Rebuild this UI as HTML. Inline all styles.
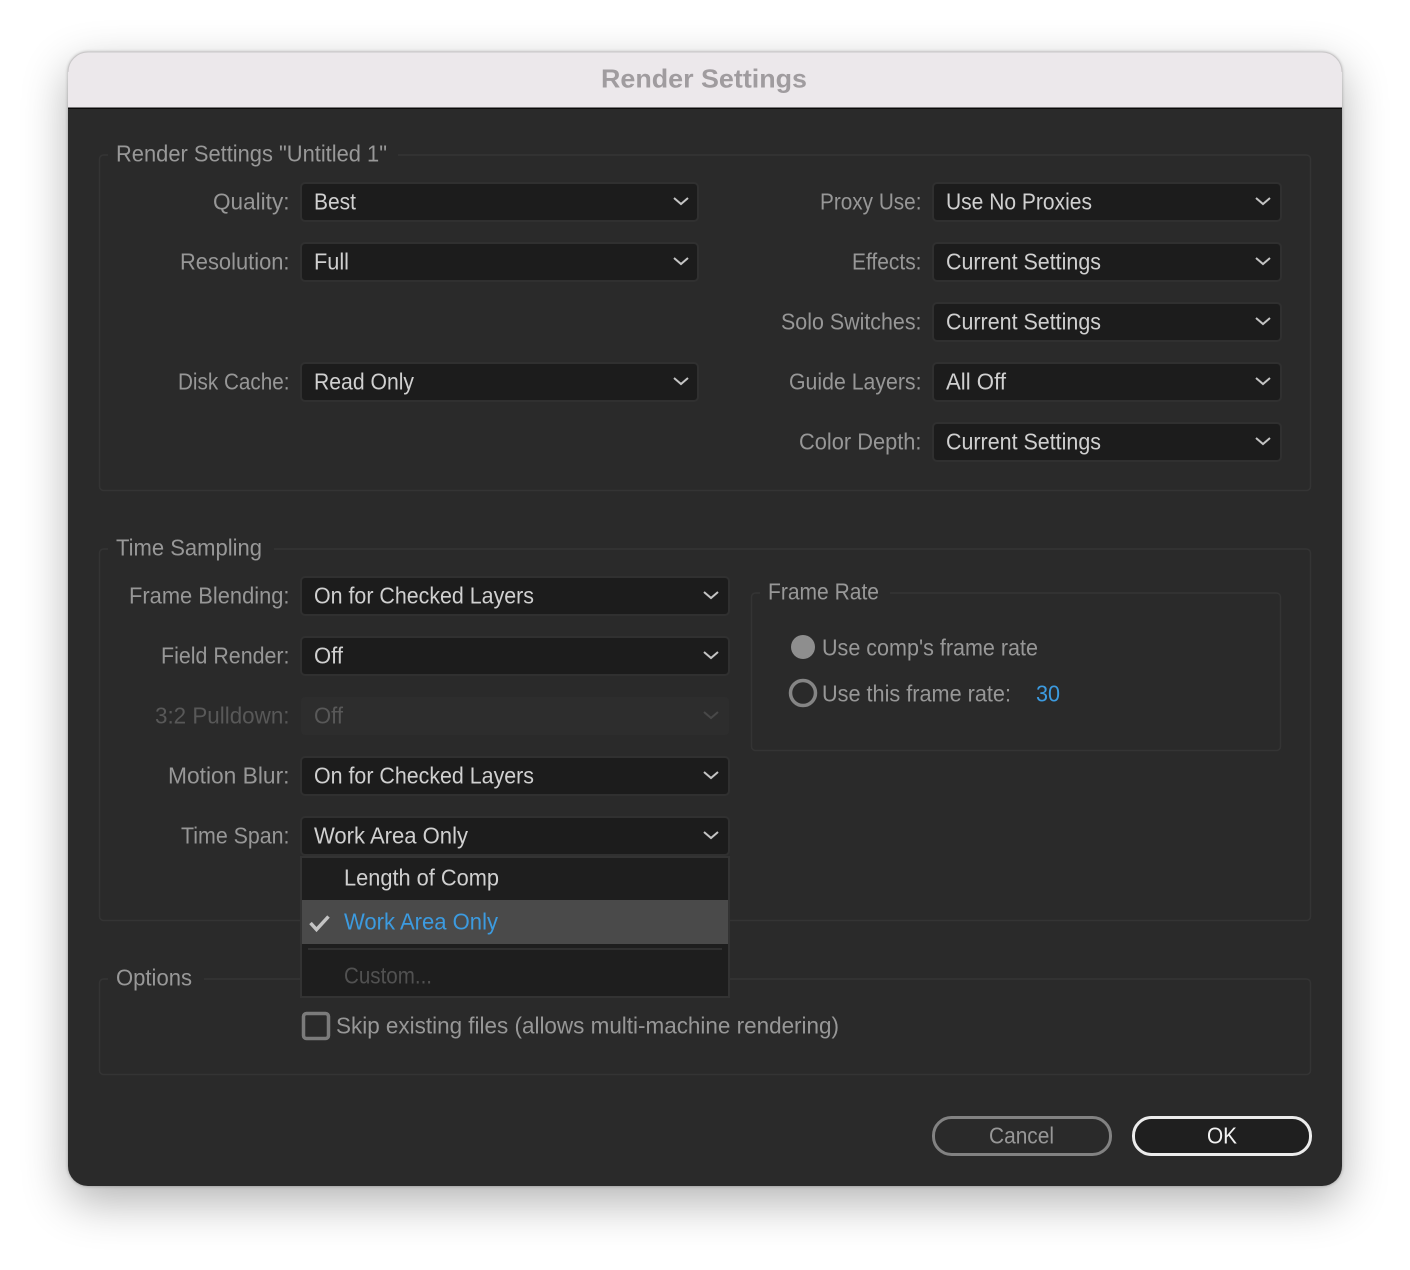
<!DOCTYPE html>
<html><head><meta charset="utf-8"><title>Render Settings</title>
<style>
html,body{margin:0;padding:0;width:1410px;height:1270px;background:#fff;overflow:hidden}
#win{position:absolute;left:68px;top:52px;width:1274px;height:1134px;border-radius:20px;background:#2a2a2a;box-shadow:0 16px 46px rgba(0,0,0,.30),0 0 3px rgba(0,0,0,.3)}
svg{position:absolute;left:0;top:0}
text{font-family:"Liberation Sans",sans-serif;font-size:23px}
.l{fill:#979797}.v{fill:#d0d0d0}.g{fill:#989898}.d{fill:#585858}
.s{fill:#1c1c1c;stroke:#303030;stroke-width:2}
.c{fill:none;stroke:#c4c4c4;stroke-width:2}
.b{fill:none;stroke:#343434;stroke-width:1.5}
</style></head><body>
<div id="win"></div>
<svg width="1410" height="1270" viewBox="0 0 1410 1270">
<path d="M68 108V72a20 20 0 0 1 20-20H1322a20 20 0 0 1 20 20V108Z" fill="#ece8eb"/>
<path d="M68 72a20 20 0 0 1 20-20H1322a20 20 0 0 1 20 20" fill="none" stroke="#c9c7c8" stroke-width="1"/>
<rect x="68" y="107.500" width="1274" height="1.500" fill="#0a0a0a"/>
<text x="601" y="87.500" textLength="206" lengthAdjust="spacingAndGlyphs" style="font-size:26px;font-weight:bold" fill="#a09c9f">Render Settings</text>

<!-- group frames -->
<path class="b" d="M108 155H103.500a4 4 0 0 0-4 4V486.500a4 4 0 0 0 4 4H1306.500a4 4 0 0 0 4-4V159a4 4 0 0 0-4-4H398"/>
<path class="b" d="M108 549H103.500a4 4 0 0 0-4 4V916.500a4 4 0 0 0 4 4H1306.500a4 4 0 0 0 4-4V553a4 4 0 0 0-4-4H274"/>
<path class="b" d="M108 979H103.500a4 4 0 0 0-4 4V1070.500a4 4 0 0 0 4 4H1306.500a4 4 0 0 0 4-4V983a4 4 0 0 0-4-4H204"/>
<path class="b" d="M760 593H755.500a4 4 0 0 0-4 4V746.500a4 4 0 0 0 4 4H1276.500a4 4 0 0 0 4-4V597a4 4 0 0 0-4-4H890"/>

<text class="g" x="116" y="161.500" textLength="271" lengthAdjust="spacingAndGlyphs">Render Settings "Untitled 1"</text>
<text class="g" x="116" y="555.500" textLength="146" lengthAdjust="spacingAndGlyphs">Time Sampling</text>
<text class="g" x="768" y="599.500" textLength="111" lengthAdjust="spacingAndGlyphs">Frame Rate</text>
<text class="g" x="116" y="985.500" textLength="76" lengthAdjust="spacingAndGlyphs">Options</text>

<!-- selects left -->
<rect class="s" x="301" y="183" width="397" height="38" rx="4"/>
<rect class="s" x="301" y="243" width="397" height="38" rx="4"/>
<rect class="s" x="301" y="363" width="397" height="38" rx="4"/>
<!-- selects right -->
<rect class="s" x="933" y="183" width="348" height="38" rx="4"/>
<rect class="s" x="933" y="243" width="348" height="38" rx="4"/>
<rect class="s" x="933" y="303" width="348" height="38" rx="4"/>
<rect class="s" x="933" y="363" width="348" height="38" rx="4"/>
<rect class="s" x="933" y="423" width="348" height="38" rx="4"/>
<!-- selects time -->
<rect class="s" x="301" y="577" width="428" height="38" rx="4"/>
<rect class="s" x="301" y="637" width="428" height="38" rx="4"/>
<rect x="301" y="697" width="428" height="38" rx="4" fill="#2d2d2d"/>
<rect class="s" x="301" y="757" width="428" height="38" rx="4"/>
<rect class="s" x="301" y="817" width="428" height="38" rx="4"/>

<!-- chevrons -->
<path class="c" d="M674 198l7 6 7-6M674 258l7 6 7-6M674 378l7 6 7-6"/>
<path class="c" d="M1256 198l7 6 7-6M1256 258l7 6 7-6M1256 318l7 6 7-6M1256 378l7 6 7-6M1256 438l7 6 7-6"/>
<path class="c" d="M704 592l7 6 7-6M704 652l7 6 7-6M704 772l7 6 7-6M704 832l7 6 7-6"/>
<path d="M704 712l7 6 7-6" fill="none" stroke="#484848" stroke-width="2"/>

<!-- labels -->
<text class="l" x="213" y="209.500" textLength="76.500" lengthAdjust="spacingAndGlyphs">Quality:</text>
<text class="l" x="180" y="269.500" textLength="109.500" lengthAdjust="spacingAndGlyphs">Resolution:</text>
<text class="l" x="178" y="389.500" textLength="111.500" lengthAdjust="spacingAndGlyphs">Disk Cache:</text>
<text class="l" x="820" y="209.500" textLength="101.500" lengthAdjust="spacingAndGlyphs">Proxy Use:</text>
<text class="l" x="852" y="269.500" textLength="69.500" lengthAdjust="spacingAndGlyphs">Effects:</text>
<text class="l" x="781" y="329.500" textLength="140.500" lengthAdjust="spacingAndGlyphs">Solo Switches:</text>
<text class="l" x="789" y="389.500" textLength="132.500" lengthAdjust="spacingAndGlyphs">Guide Layers:</text>
<text class="l" x="799" y="449.500" textLength="122.500" lengthAdjust="spacingAndGlyphs">Color Depth:</text>
<text class="l" x="129" y="603.500" textLength="160.500" lengthAdjust="spacingAndGlyphs">Frame Blending:</text>
<text class="l" x="161" y="663.500" textLength="128.500" lengthAdjust="spacingAndGlyphs">Field Render:</text>
<text class="d" x="155" y="723.500" textLength="134.500" lengthAdjust="spacingAndGlyphs">3:2 Pulldown:</text>
<text class="l" x="168" y="783.500" textLength="121.500" lengthAdjust="spacingAndGlyphs">Motion Blur:</text>
<text class="l" x="181" y="843.500" textLength="108.500" lengthAdjust="spacingAndGlyphs">Time Span:</text>

<!-- values -->
<text class="v" x="314" y="209.500" textLength="42" lengthAdjust="spacingAndGlyphs">Best</text>
<text class="v" x="314" y="269.500" textLength="35" lengthAdjust="spacingAndGlyphs">Full</text>
<text class="v" x="314" y="389.500" textLength="100" lengthAdjust="spacingAndGlyphs">Read Only</text>
<text class="v" x="946" y="209.500" textLength="146" lengthAdjust="spacingAndGlyphs">Use No Proxies</text>
<text class="v" x="946" y="269.500" textLength="155" lengthAdjust="spacingAndGlyphs">Current Settings</text>
<text class="v" x="946" y="329.500" textLength="155" lengthAdjust="spacingAndGlyphs">Current Settings</text>
<text class="v" x="946" y="389.500" textLength="60" lengthAdjust="spacingAndGlyphs">All Off</text>
<text class="v" x="946" y="449.500" textLength="155" lengthAdjust="spacingAndGlyphs">Current Settings</text>
<text class="v" x="314" y="603.500" textLength="220" lengthAdjust="spacingAndGlyphs">On for Checked Layers</text>
<text class="v" x="314" y="663.500" textLength="29" lengthAdjust="spacingAndGlyphs">Off</text>
<text class="d" x="314" y="723.500" textLength="29" lengthAdjust="spacingAndGlyphs">Off</text>
<text class="v" x="314" y="783.500" textLength="220" lengthAdjust="spacingAndGlyphs">On for Checked Layers</text>
<text class="v" x="314" y="843.500" textLength="154" lengthAdjust="spacingAndGlyphs">Work Area Only</text>

<!-- frame rate -->
<circle cx="803" cy="647" r="12" fill="#8e8e8e"/>
<circle cx="803" cy="693" r="12.500" fill="none" stroke="#858585" stroke-width="3.500"/>
<text class="l" x="822" y="655.500" textLength="216" lengthAdjust="spacingAndGlyphs">Use comp's frame rate</text>
<text class="l" x="822" y="701.500" textLength="189" lengthAdjust="spacingAndGlyphs">Use this frame rate:</text>
<text x="1036" y="701.500" textLength="24" lengthAdjust="spacingAndGlyphs" fill="#3c9be0">30</text>

<!-- checkbox -->
<rect x="303.500" y="1013.500" width="25" height="25" rx="3" fill="none" stroke="#7b7b7b" stroke-width="3.500"/>
<text class="l" x="336" y="1033.500" textLength="503" lengthAdjust="spacingAndGlyphs">Skip existing files (allows multi-machine rendering)</text>

<!-- popup -->
<rect x="301" y="857" width="428" height="140" fill="#1e1e1e" stroke="#333" stroke-width="2"/>
<rect x="302" y="900" width="426" height="44" fill="#4a4a4a"/>
<rect x="308" y="948" width="414" height="2" fill="#303030"/>
<path d="M310.500 923l6 6.500 12-13" fill="none" stroke="#c4c4c4" stroke-width="3.500"/>
<text class="v" x="344" y="885.500" textLength="155" lengthAdjust="spacingAndGlyphs">Length of Comp</text>
<text x="344" y="929.500" textLength="154" lengthAdjust="spacingAndGlyphs" fill="#3c9be0">Work Area Only</text>
<text x="344" y="983.500" textLength="88" lengthAdjust="spacingAndGlyphs" fill="#515151">Custom...</text>

<!-- buttons -->
<rect x="933.500" y="1117.500" width="177" height="37" rx="18" fill="none" stroke="#828282" stroke-width="3"/>
<rect x="1133.500" y="1117.500" width="177" height="37" rx="18" fill="#1f1f1f" stroke="#ececec" stroke-width="3"/>
<text class="l" x="989" y="1143.500" textLength="65" lengthAdjust="spacingAndGlyphs">Cancel</text>
<text x="1207" y="1143.500" textLength="30" lengthAdjust="spacingAndGlyphs" fill="#f2f2f2">OK</text>
</svg>
</body></html>
